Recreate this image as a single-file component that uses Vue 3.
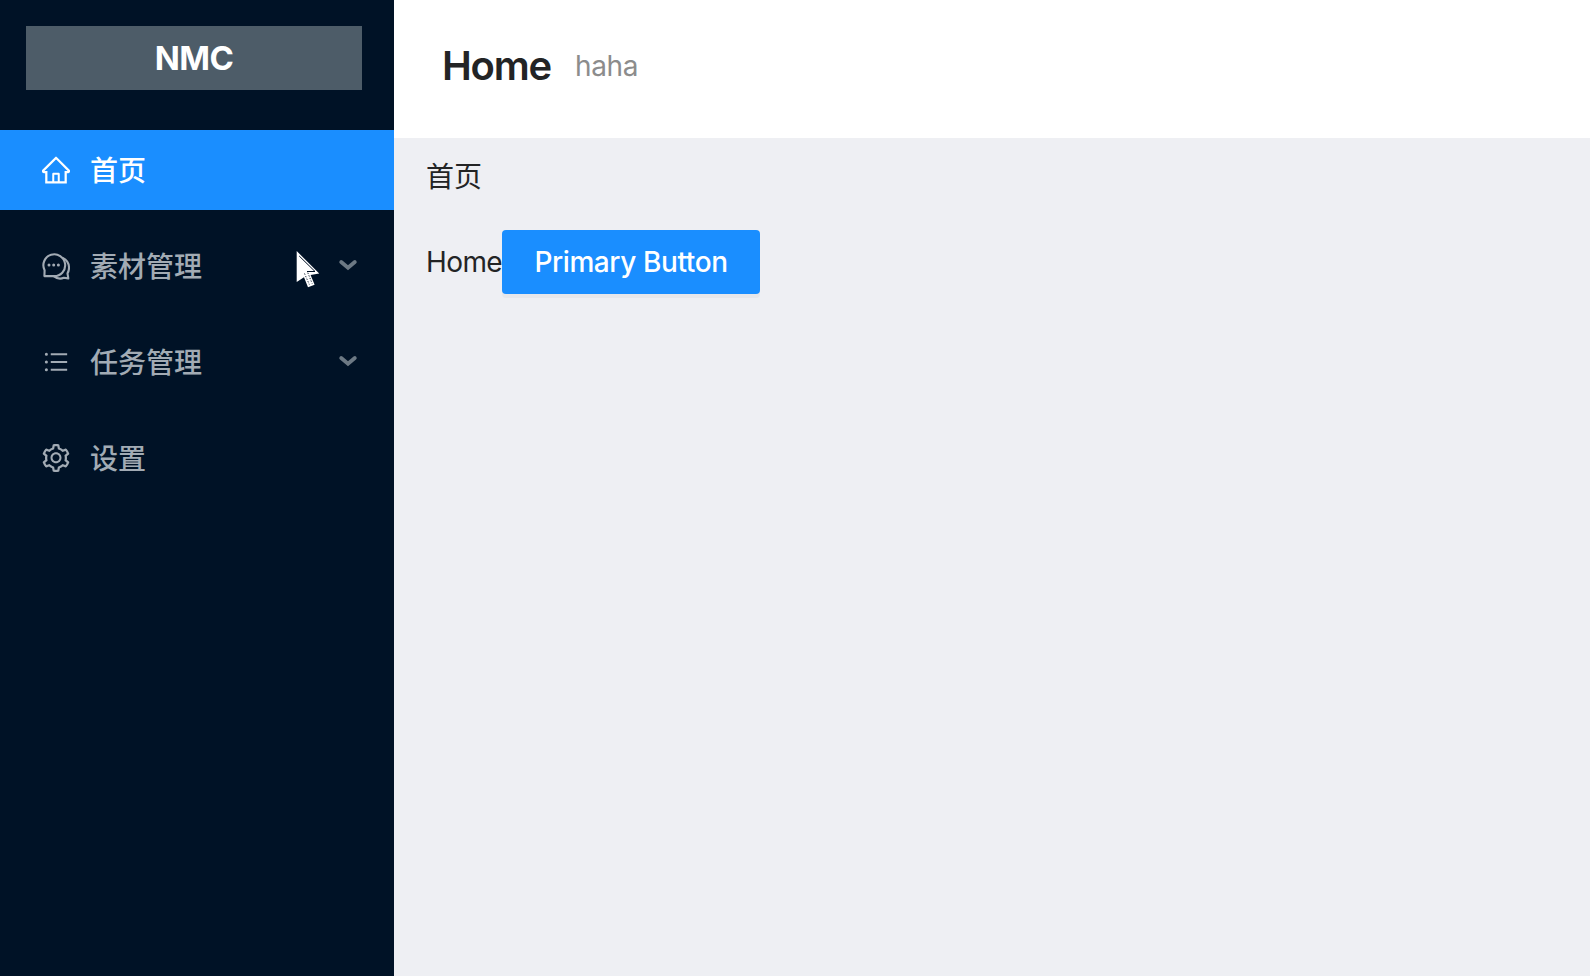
<script setup>
const items = [
  { label: '首页', icon: 'home', active: true },
  { label: '素材管理', icon: 'comment', sub: true },
  { label: '任务管理', icon: 'list', sub: true },
  { label: '设置', icon: 'setting' },
]
const paths = {
  home: 'M946.5 505L560.1 118.8l-25.9-25.9a31.5 31.5 0 00-44.4 0L77.5 505a63.9 63.9 0 00-18.8 46c.4 35.2 29.7 63.3 64.9 63.3h42.5V940h691.8V614.3h43.4c17.1 0 33.2-6.7 45.3-18.8a63.6 63.6 0 0018.7-45.3c0-17-6.7-33.1-18.8-45.2zM568 868H456V664h112v204zm217.9-325.7V868H632V640c0-22.1-17.9-40-40-40H432c-22.1 0-40 17.9-40 40v228H238.1V542.3h-96l370-369.7 23.1 23.1L882 542.3h-96.1z',
  list: 'M912 192H328c-4.4 0-8 3.6-8 8v56c0 4.4 3.6 8 8 8h584c4.4 0 8-3.6 8-8v-56c0-4.4-3.6-8-8-8zm0 284H328c-4.4 0-8 3.6-8 8v56c0 4.4 3.6 8 8 8h584c4.4 0 8-3.6 8-8v-56c0-4.4-3.6-8-8-8zm0 284H328c-4.4 0-8 3.6-8 8v56c0 4.4 3.6 8 8 8h584c4.4 0 8-3.6 8-8v-56c0-4.4-3.6-8-8-8zM104 228a56 56 0 10112 0 56 56 0 10-112 0zm0 284a56 56 0 10112 0 56 56 0 10-112 0zm0 284a56 56 0 10112 0 56 56 0 10-112 0z',
  setting: 'M924.8 625.7l-65.5-56c3.1-19 4.7-38.4 4.7-57.8s-1.6-38.8-4.7-57.8l65.5-56a32.03 32.03 0 009.3-35.2l-.9-2.6a443.74 443.74 0 00-79.7-137.9l-1.8-2.1a32.12 32.12 0 00-35.1-9.5l-81.3 28.9c-30-24.6-63.5-44-99.7-57.6l-15.7-85a32.05 32.05 0 00-25.8-25.7l-2.7-.5c-52.1-9.4-106.9-9.4-159 0l-2.7.5a32.05 32.05 0 00-25.8 25.7l-15.8 85.4a351.86 351.86 0 00-99 57.4l-81.9-29.1a32 32 0 00-35.1 9.5l-1.8 2.1a446.02 446.02 0 00-79.7 137.9l-.9 2.6c-4.5 12.5-.8 26.5 9.3 35.2l66.3 56.6c-3.1 18.8-4.6 38-4.6 57.1 0 19.2 1.5 38.4 4.6 57.1L99 625.5a32.03 32.03 0 00-9.3 35.2l.9 2.6c18.1 50.4 44.9 96.9 79.7 137.9l1.8 2.1a32.12 32.12 0 0035.1 9.5l81.9-29.1c29.8 24.5 63.1 43.9 99 57.4l15.8 85.4a32.05 32.05 0 0025.8 25.7l2.7.5a449.4 449.4 0 00159 0l2.7-.5a32.05 32.05 0 0025.8-25.7l15.7-85a350 350 0 0099.7-57.6l81.3 28.9a32 32 0 0035.1-9.5l1.8-2.1c34.8-41.1 61.6-87.5 79.7-137.9l.9-2.6c4.5-12.3.8-26.3-9.3-35zM788.3 465.9c2.5 15.1 3.8 30.6 3.8 46.1s-1.3 31-3.8 46.1l-6.6 40.1 74.7 63.9a370.03 370.03 0 01-42.6 73.6L721 702.8l-31.4 25.8c-23.9 19.6-50.5 35-79.3 45.8l-38.1 14.3-17.9 97a377.5 377.5 0 01-85 0l-17.9-97.2-37.8-14.5c-28.5-10.8-55-26.2-78.7-45.7l-31.4-25.9-93.4 33.2c-17-22.9-31.2-47.6-42.6-73.6l75.5-64.5-6.5-40c-2.4-14.9-3.7-30.3-3.7-45.5 0-15.3 1.2-30.6 3.7-45.5l6.5-40-75.5-64.5c11.3-26.1 25.6-50.7 42.6-73.6l93.4 33.2 31.4-25.9c23.7-19.5 50.2-34.9 78.7-45.7l37.9-14.3 17.9-97.2c28.1-3.2 56.8-3.2 85 0l17.9 97 38.1 14.3c28.7 10.8 55.4 26.2 79.3 45.8l31.4 25.8 92.8-32.9c17 22.9 31.2 47.6 42.6 73.6L781.8 426l6.5 39.9zM512 326c-97.2 0-176 78.8-176 176s78.8 176 176 176 176-78.8 176-176-78.8-176-176-176zm79.2 255.2A111.6 111.6 0 01512 614c-29.9 0-58-11.7-79.2-32.8A111.6 111.6 0 01400 502c0-29.9 11.7-58 32.8-79.2C454 401.6 482.1 390 512 390c29.9 0 58 11.6 79.2 32.8A111.6 111.6 0 01624 502c0 29.9-11.7 58-32.8 79.2z',
}
</script>

<template>
  <div class="layout">
    <aside class="sider">
      <div class="logo">NMC</div>
      <nav class="menu">
        <a v-for="item in items" :key="item.label" class="item" :class="{ active: item.active }">
          <svg v-if="item.icon === 'comment'" class="icon" viewBox="0 0 28 28" fill="none" stroke="currentColor" stroke-width="2.1" stroke-linejoin="round">
            <path d="M2.6 18.2A10.9 10.9 0 1 1 11.7 24.1H2.4L2.6 18.2Z" />
            <path d="M20.8 5.9C24.8 7.9 27 11.6 27 15.8C27 17.9 26.5 19.8 25.5 21.4L26.3 26.4L21.8 25.8C18.6 27.2 14.8 26.6 11.7 24.1" />
            <g fill="currentColor" stroke="none">
              <circle cx="7" cy="13" r="1.5" />
              <circle cx="11.7" cy="13" r="1.5" />
              <circle cx="16.4" cy="13" r="1.5" />
            </g>
          </svg>
          <svg v-else class="icon" :viewBox="item.icon === 'list' ? '0 0 1024 1024' : '64 64 896 896'" fill="currentColor"><path :d="paths[item.icon]" /></svg>
          <span class="label">{{ item.label }}</span>
          <svg v-if="item.sub" class="arrow" viewBox="0 0 20 12" fill="none" stroke="currentColor" stroke-width="3.8" stroke-linecap="round">
            <path d="M3.2 3L10 8.8L16.8 3" />
          </svg>
        </a>
      </nav>
    </aside>
    <section class="main">
      <header class="header">
        <h1 class="title">Home</h1>
        <span class="subtitle">haha</span>
      </header>
      <main class="content">
        <div class="crumb">首页</div>
        <div class="row"><span class="word">Home</span><button class="btn"><span>Primary Button</span></button></div>
      </main>
    </section>
    <svg class="cursor" viewBox="0 0 24 38">
      <path d="M.7 0V31L8 26.3L12 36.3L18.6 33.8L14.6 24L23.2 22.6Z" fill="#fff" />
      <path d="M3.2 5L19 20.5H11" fill="none" stroke="#001024" stroke-width="1" />
      <path d="M8.5 22.5L13.3 33.5M11.8 21.7L16.2 32.6" fill="none" stroke="#001024" stroke-width=".9" stroke-dasharray="1.3 1.5" />
    </svg>
  </div>
</template>

<style>
body { margin: 0; }
</style>

<style scoped>
.layout {
  position: relative;
  display: flex;
  height: 976px;
  overflow: hidden;
  background: #eeeff3;
  color: #232425;
  font-family: Inter, "Noto Sans CJK SC", sans-serif;
  font-size: 28px;
}
.sider { width: 394px; flex: none; background: #001226; }
.logo {
  height: 64px;
  margin: 26px 32px 40px 26px;
  background: #4d5c68;
  color: #fff;
  font-size: 33px;
  font-weight: 700;
  line-height: 64px;
  text-align: center;
  letter-spacing: -0.6px;
}
.menu { display: flex; flex-direction: column; gap: 16px; }
.item {
  display: flex;
  align-items: center;
  height: 80px;
  box-sizing: border-box;
  padding: 0 36px 0 42px;
  color: #a2abb4;
}
.item.active { background: #1a8eff; color: #fff; }
.icon { width: 28px; height: 28px; margin-right: 20px; flex: none; }
.label { flex: 1; padding-top: 2px; line-height: 40px; font-weight: 500; }
.arrow { width: 20px; height: 12px; color: #6c7984; margin-top: -3px; }
.main { flex: 1; display: flex; flex-direction: column; }
.header {
  display: flex;
  align-items: center;
  gap: 24px;
  height: 138px;
  box-sizing: border-box;
  padding: 0 48px 6px;
  background: #fff;
}
.title { margin: 0; font-size: 40px; font-weight: 600; line-height: 64px; letter-spacing: -1.2px; }
.subtitle { color: #8c8c8c; line-height: 44px; letter-spacing: -0.4px; }
.content { padding: 17px 32px; }
.crumb { line-height: 44px; margin-bottom: 31px; }
.row { display: flex; align-items: center; height: 64px; }
.word { width: 76px; letter-spacing: -0.6px; }
.btn {
  width: 258px;
  height: 64px;
  padding: 0;
  border: 0;
  border-radius: 4px;
  background: #1a8eff;
  color: #fff;
  font: inherit;
  font-weight: 500;
  letter-spacing: -0.4px;
  white-space: nowrap;
  box-shadow: 0 4px 0 rgba(0, 0, 0, 0.03);
}
.cursor { position: absolute; left: 296px; top: 251px; width: 24px; height: 38px; }
</style>
